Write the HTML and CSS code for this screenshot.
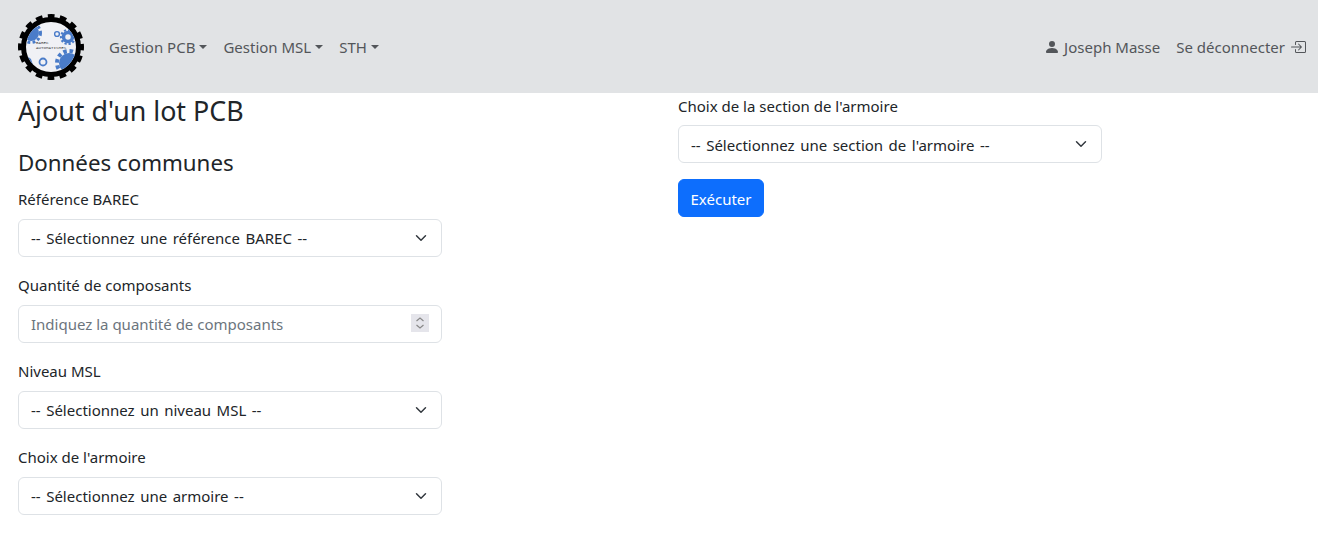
FILE: index.html
```html
<!DOCTYPE html>
<html lang="fr">
<head>
<meta charset="utf-8">
<title>Ajout d'un lot PCB</title>
<link rel="stylesheet" href="styles.css">
</head>
<body>
<nav class="navbar">
  <a class="brand" href="#">
    <svg class="logo" viewBox="0 0 70 70" width="70" height="70" aria-hidden="true">
      <defs><clipPath id="disc"><circle cx="35" cy="35" r="25"/></clipPath></defs>
      <circle cx="35" cy="35" r="29.500" fill="none" stroke="#000" stroke-width="7" stroke-dasharray="6.400 5.180" stroke-dashoffset="3.200"/>
      <circle cx="35" cy="35" r="27.500" fill="#f0f1f5" stroke="#000" stroke-width="5"/>
      <g clip-path="url(#disc)">
        <g fill="#4a7cc9" stroke="#4a7cc9">
          <circle cx="15" cy="21" r="8" stroke="none"/>
          <circle cx="15" cy="21" r="9.500" fill="none" stroke-width="3" stroke-dasharray="2.800 2.400"/>
          <circle cx="53" cy="51" r="10" stroke="none"/>
          <circle cx="53" cy="51" r="12" fill="none" stroke-width="4" stroke-dasharray="3.500 2.800"/>
          <circle cx="52" cy="25" r="4.500" fill="none" stroke-width="3.500"/>
          <circle cx="52" cy="25" r="7" fill="none" stroke-width="2.200" stroke-dasharray="2.200 1.900"/>
          <circle cx="41" cy="22" r="2.400" fill="none" stroke-width="1.400"/>
          <circle cx="27" cy="50" r="3.500" fill="none" stroke-width="1.800"/>
          <path d="M11 44 L15 47 L17 53 L13 52 Z" stroke="none"/>
        </g>
      </g>
      <text class="logo-text" x="20" y="32">BAREC</text>
      <text class="logo-text" x="20" y="37">AUTOMATISMES</text>
    </svg>
  </a>
  <ul class="nav-list">
    <li><a class="nav-link dropdown" href="#">Gestion PCB</a></li>
    <li><a class="nav-link dropdown" href="#">Gestion MSL</a></li>
    <li><a class="nav-link dropdown" href="#">STH</a></li>
  </ul>
  <ul class="nav-list nav-right">
    <li>
      <a class="nav-link" href="#">
        <svg class="icon-person" viewBox="0 0 16 16" width="16" height="16" aria-hidden="true"><path fill="currentColor" d="M3 14s-1 0-1-1 1-4 6-4 6 3 6 4-1 1-1 1H3zm5-6a3 3 0 1 0 0-6 3 3 0 0 0 0 6z"/></svg>
        Joseph Masse
      </a>
    </li>
    <li>
      <a class="nav-link" href="#">
        Se déconnecter
        <svg class="icon-exit" viewBox="0 0 16 16" width="16" height="16" aria-hidden="true"><path fill="currentColor" fill-rule="evenodd" d="M6 3.500a.5.5 0 0 1 .5-.5h8a.5.5 0 0 1 .5.500v9a.5.5 0 0 1-.5.500h-8a.5.5 0 0 1-.5-.5v-2a.5.5 0 0 0-1 0v2A1.500 1.500 0 0 0 6.500 14h8a1.500 1.500 0 0 0 1.500-1.500v-9A1.500 1.500 0 0 0 14.500 2h-8A1.500 1.500 0 0 0 5 3.500v2a.5.5 0 0 0 1 0v-2z"/><path fill="currentColor" fill-rule="evenodd" d="M11.850 8.350a.5.5 0 0 0 0-.7l-3-3a.5.5 0 0 0-.7.700L10.290 7.500H1.500a.5.5 0 0 0 0 1h8.790l-2.140 2.150a.5.5 0 0 0 .7.700l3-3z"/></svg>
      </a>
    </li>
  </ul>
</nav>
<main class="content">
  <section class="column">
    <h1 class="page-title">Ajout d'un lot PCB</h1>
    <h2 class="section-title">Données communes</h2>
    <div class="field">
      <label class="field-label" for="ref">Référence BAREC</label>
      <select class="control select" id="ref"><option>-- Sélectionnez une référence BAREC --</option></select>
    </div>
    <div class="field">
      <label class="field-label" for="qty">Quantité de composants</label>
      <input class="control number" id="qty" type="number" placeholder="Indiquez la quantité de composants">
    </div>
    <div class="field">
      <label class="field-label" for="msl">Niveau MSL</label>
      <select class="control select" id="msl"><option>-- Sélectionnez un niveau MSL --</option></select>
    </div>
    <div class="field">
      <label class="field-label" for="arm">Choix de l'armoire</label>
      <select class="control select" id="arm"><option>-- Sélectionnez une armoire --</option></select>
    </div>
  </section>
  <section class="column column-side">
    <div class="field">
      <label class="field-label" for="sec">Choix de la section de l'armoire</label>
      <select class="control select" id="sec"><option>-- Sélectionnez une section de l'armoire --</option></select>
    </div>
    <button class="btn" type="button">Exécuter</button>
  </section>
</main>
</body>
</html>
```
FILE: styles.css
```css
* { box-sizing: border-box; }
html, body { margin: 0; padding: 0; }
body {
  font-family: "Noto Sans", "Open Sans", sans-serif;
  font-size: 15px;
  line-height: 24px;
  color: #212529;
  background: #fff;
}
a { text-decoration: none; color: inherit; }
ul { list-style: none; margin: 0; padding: 0; }

.navbar {
  display: flex;
  align-items: center;
  height: 93px;
  background: #e1e3e5;
  padding: 0 4px 0 16px;
}
.brand { display: flex; margin-right: 15px; }
.logo-text { font-family: "Liberation Mono", monospace; font-size: 4.200px; fill: #444; }
.nav-list { display: flex; }
.nav-right { margin-left: auto; }
.nav-link {
  display: flex;
  align-items: center;
  padding: 8px;
  color: #53565a;
  white-space: nowrap;
}
.dropdown::after {
  content: "";
  margin-left: 4px;
  border-top: 4.800px solid currentColor;
  border-left: 4.800px solid transparent;
  border-right: 4.800px solid transparent;
}
.icon-person { margin-right: 4px; }
.icon-exit { margin-left: 5px; }

.content {
  display: grid;
  grid-template-columns: 660px 424px;
  padding-left: 18px;
}
.column { width: 424px; display: flex; flex-direction: column; align-items: flex-start; }
.page-title {
  margin: 1px 0 20px;
  font-size: 26.800px;
  line-height: 34px;
  font-weight: 400;
}
.section-title {
  margin: 0 0 10px;
  font-size: 22.300px;
  line-height: 29px;
  font-weight: 400;
}
.field { width: 100%; margin-bottom: 16px; }
.field-label { display: block; margin-bottom: 8px; }
.column-side .field-label { padding-top: 1px; margin-bottom: 7px; }
.control {
  display: block;
  width: 100%;
  height: 38px;
  padding: 6px 12px;
  font: inherit;
  color: #212529;
  background-color: #fff;
  border: 1px solid #dee2e6;
  border-radius: 6px;
}
.select {
  appearance: none;
  padding: 6px 36px 6px 12px;
  word-spacing: 1.600px;
  background-image: url("data:image/svg+xml,%3csvg xmlns='http://www.w3.org/2000/svg' viewBox='0 0 16 16'%3e%3cpath fill='none' stroke='%23343a40' stroke-linecap='round' stroke-linejoin='round' stroke-width='2' d='m2 5 6 6 6-6'/%3e%3c/svg%3e");
  background-repeat: no-repeat;
  background-position: right 12px center;
  background-size: 16px 12px;
}
.column-side .select { padding: 7px 36px 5px 12px; }
.number::placeholder { color: #6c757d; opacity: 1; }
.number::-webkit-inner-spin-button {
  appearance: none;
  width: 18px;
  height: 18px;
  opacity: 1;
  background: #e5e5eb url("data:image/svg+xml,%3csvg xmlns='http://www.w3.org/2000/svg' viewBox='0 0 18 18'%3e%3cpath fill='none' stroke='%23888' stroke-width='1.200' d='m5.500 7 3.500-3 3.500 3M5.500 11l3.500 3 3.500-3'/%3e%3c/svg%3e") center / 18px 18px no-repeat;
}
.btn {
  width: 86px;
  height: 38px;
  padding: 2px 0 0;
  font: inherit;
  color: #fff;
  background: #0d6efd;
  border: 1px solid #0d6efd;
  border-radius: 6px;
}
```
